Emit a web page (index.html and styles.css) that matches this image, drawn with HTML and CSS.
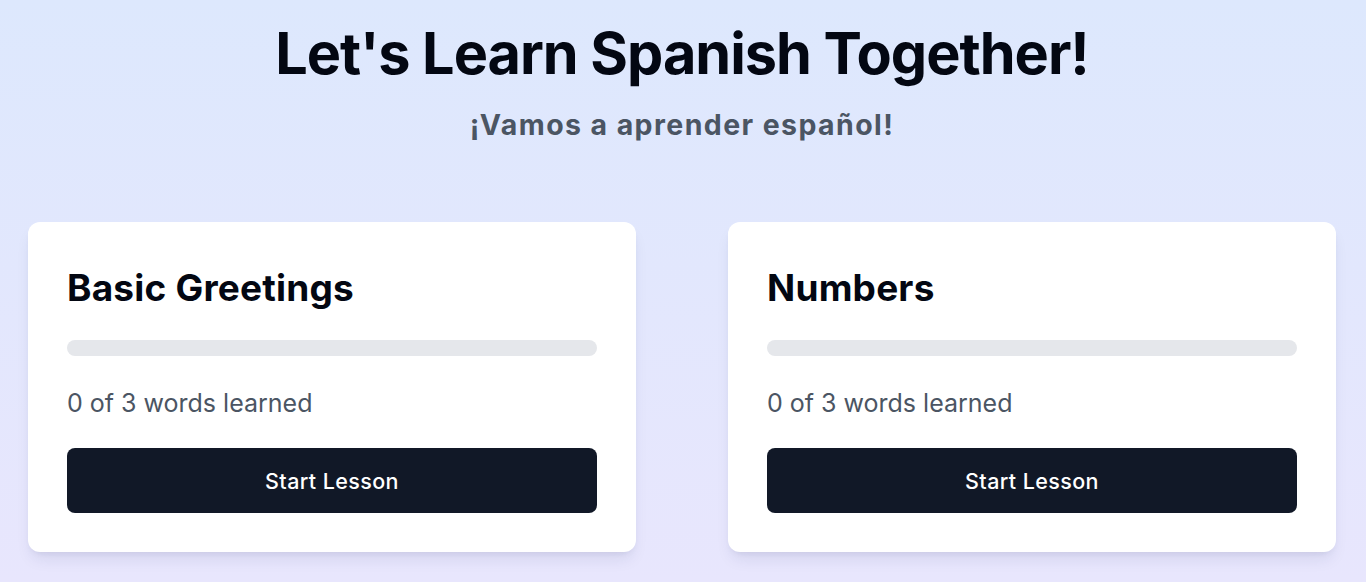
FILE: index.html
```html
<!DOCTYPE html>
<html lang="en">
<head>
<meta charset="utf-8">
<title>Let's Learn Spanish Together!</title>
<link rel="stylesheet" href="styles.css">
</head>
<body>
<main class="page">
  <header class="hero">
    <h1 class="hero-title">Let's Learn Spanish Together!</h1>
    <p class="hero-sub">¡Vamos a aprender español!</p>
  </header>
  <section class="lessons">
    <article class="card">
      <h2 class="card-title">Basic Greetings</h2>
      <div class="progress"><div class="progress-fill" style="width:0%"></div></div>
      <p class="card-meta">0 of 3 words learned</p>
      <button class="btn">Start Lesson</button>
    </article>
    <article class="card">
      <h2 class="card-title">Numbers</h2>
      <div class="progress"><div class="progress-fill" style="width:0%"></div></div>
      <p class="card-meta">0 of 3 words learned</p>
      <button class="btn">Start Lesson</button>
    </article>
  </section>
</main>
</body>
</html>
```
FILE: styles.css
```css
* { box-sizing: border-box; }
html, body { margin: 0; padding: 0; }
body {
  min-height: 100vh;
  font-family: Inter, "Noto Sans", "Liberation Sans", sans-serif;
  background: linear-gradient(to bottom, #dde8fd 0%, #e8e6fd 100%);
  overflow: hidden;
}
.page {
  padding: 18px 30px 0 28px;
}
.hero {
  text-align: center;
}
.hero-title {
  margin: 0;
  font-size: 57.6px;
  font-weight: 700;
  line-height: 70px;
  color: #030712;
  letter-spacing: -1px;
}
.hero-sub {
  margin: 19px 0 0;
  font-size: 28.5px;
  font-weight: 700;
  line-height: 36px;
  color: #4b5563;
  letter-spacing: 1.4px;
}
.lessons {
  margin-top: 79px;
  display: grid;
  grid-template-columns: 1fr 1fr;
  gap: 92px;
}
.card {
  background: #ffffff;
  border-radius: 12px;
  padding: 39px;
  box-shadow: 0 10px 16px -4px rgba(30, 40, 90, 0.10), 0 4px 7px -4px rgba(30, 40, 90, 0.10);
}
.card-title {
  margin: 0;
  font-size: 37px;
  font-weight: 700;
  line-height: 54px;
  color: #030712;
  letter-spacing: 0.2px;
}
.progress {
  margin-top: 25px;
  height: 16px;
  border-radius: 9999px;
  background: #e5e7eb;
  overflow: hidden;
}
.progress-fill {
  height: 100%;
  background: #2563eb;
}
.card-meta {
  margin: 28px 0 0;
  font-size: 25px;
  line-height: 38px;
  color: #4b5563;
}
.btn {
  display: block;
  width: 100%;
  margin-top: 26px;
  height: 65px;
  border: 0;
  border-radius: 8px;
  background: #111827;
  color: #ffffff;
  font-family: inherit;
  font-size: 21.5px;
  font-weight: 500;
  letter-spacing: 0.4px;
  cursor: pointer;
}
```
